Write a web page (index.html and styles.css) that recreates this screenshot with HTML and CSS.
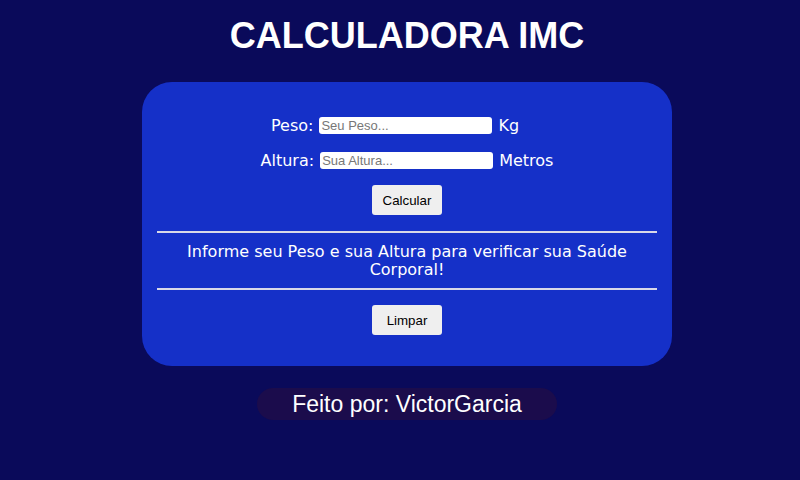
FILE: index.html
```html
<!DOCTYPE html>
<html lang="pt-BR">
<head>
<meta charset="utf-8">
<title>Calculadora IMC</title>
<link rel="stylesheet" href="styles.css">
</head>
<body>
<h1 class="title">CALCULADORA IMC</h1>
<main class="card">
  <div class="row row-peso">
    <label class="lbl" for="peso">Peso:</label>
    <input class="field" id="peso" type="text" placeholder="Seu Peso...">
    <span class="unit">Kg</span>
  </div>
  <div class="row">
    <label class="lbl" for="altura">Altura:</label>
    <input class="field" id="altura" type="text" placeholder="Sua Altura...">
    <span class="unit">Metros</span>
  </div>
  <div class="actions">
    <button class="btn" type="button">Calcular</button>
  </div>
  <hr class="sep">
  <p class="result">Informe seu Peso e sua Altura para verificar sua Saúde Corporal!</p>
  <hr class="sep sep-bottom">
  <div class="actions actions-bottom">
    <button class="btn" type="button">Limpar</button>
  </div>
</main>
<footer class="footer">
  <span class="credit">Feito por: VictorGarcia</span>
</footer>
</body>
</html>
```
FILE: styles.css
```css
* { box-sizing: border-box; }
html, body { margin: 0; padding: 0; }
body {
  background: #0a0a5a;
  color: #ffffff;
  font-family: "DejaVu Sans", Verdana, sans-serif;
  height: 480px;
  overflow: hidden;
  padding-left: 14px;
}
.title {
  font-family: "Liberation Sans", Arial, sans-serif;
  font-weight: bold;
  font-size: 36px;
  line-height: 42px;
  text-align: center;
  margin: 15px 0 25px;
}
.card {
  width: 530px;
  margin: 0 auto;
  background: #1530c8;
  border-radius: 30px;
  padding: 31px 15px 31px;
}
.row {
  display: flex;
  justify-content: center;
  align-items: center;
  gap: 6px;
  height: 24px;
  font-size: 16px;
}
.row + .row { margin-top: 11px; }
.row-peso { padding-right: 24px; }
.lbl { color: #fff; }
.field {
  width: 173px;
  height: 17px;
  border: none;
  border-radius: 3px;
  padding: 0 2px;
  background: #fff;
  font-family: "Liberation Sans", Arial, sans-serif;
  font-size: 13px;
  color: #000;
  outline: none;
}
.field::placeholder { color: #777; }
.unit { color: #fff; }
.actions {
  display: flex;
  justify-content: center;
  margin-top: 13px;
}
.btn {
  width: 70px;
  height: 30px;
  border: none;
  border-radius: 3px;
  background: #efefef;
  color: #000;
  font-family: "Liberation Sans", Arial, sans-serif;
  font-size: 13.3px;
  padding: 0;
}
.sep {
  border: none;
  height: 2px;
  background: #d8d8e8;
  margin: 16px 0 0;
}
.sep-bottom { margin-top: 0; }
.result {
  margin: 10px 0 9px;
  text-align: center;
  font-size: 16px;
  line-height: 18px;
}
.actions-bottom { margin-top: 15px; }
.footer {
  display: flex;
  justify-content: center;
  margin-top: 22px;
}
.credit {
  display: inline-block;
  width: 300px;
  height: 32px;
  line-height: 32px;
  text-align: center;
  background: #1b0c4c;
  border-radius: 16px;
  font-family: "Liberation Sans", Arial, sans-serif;
  font-size: 23px;
  color: #fff;
}
```
